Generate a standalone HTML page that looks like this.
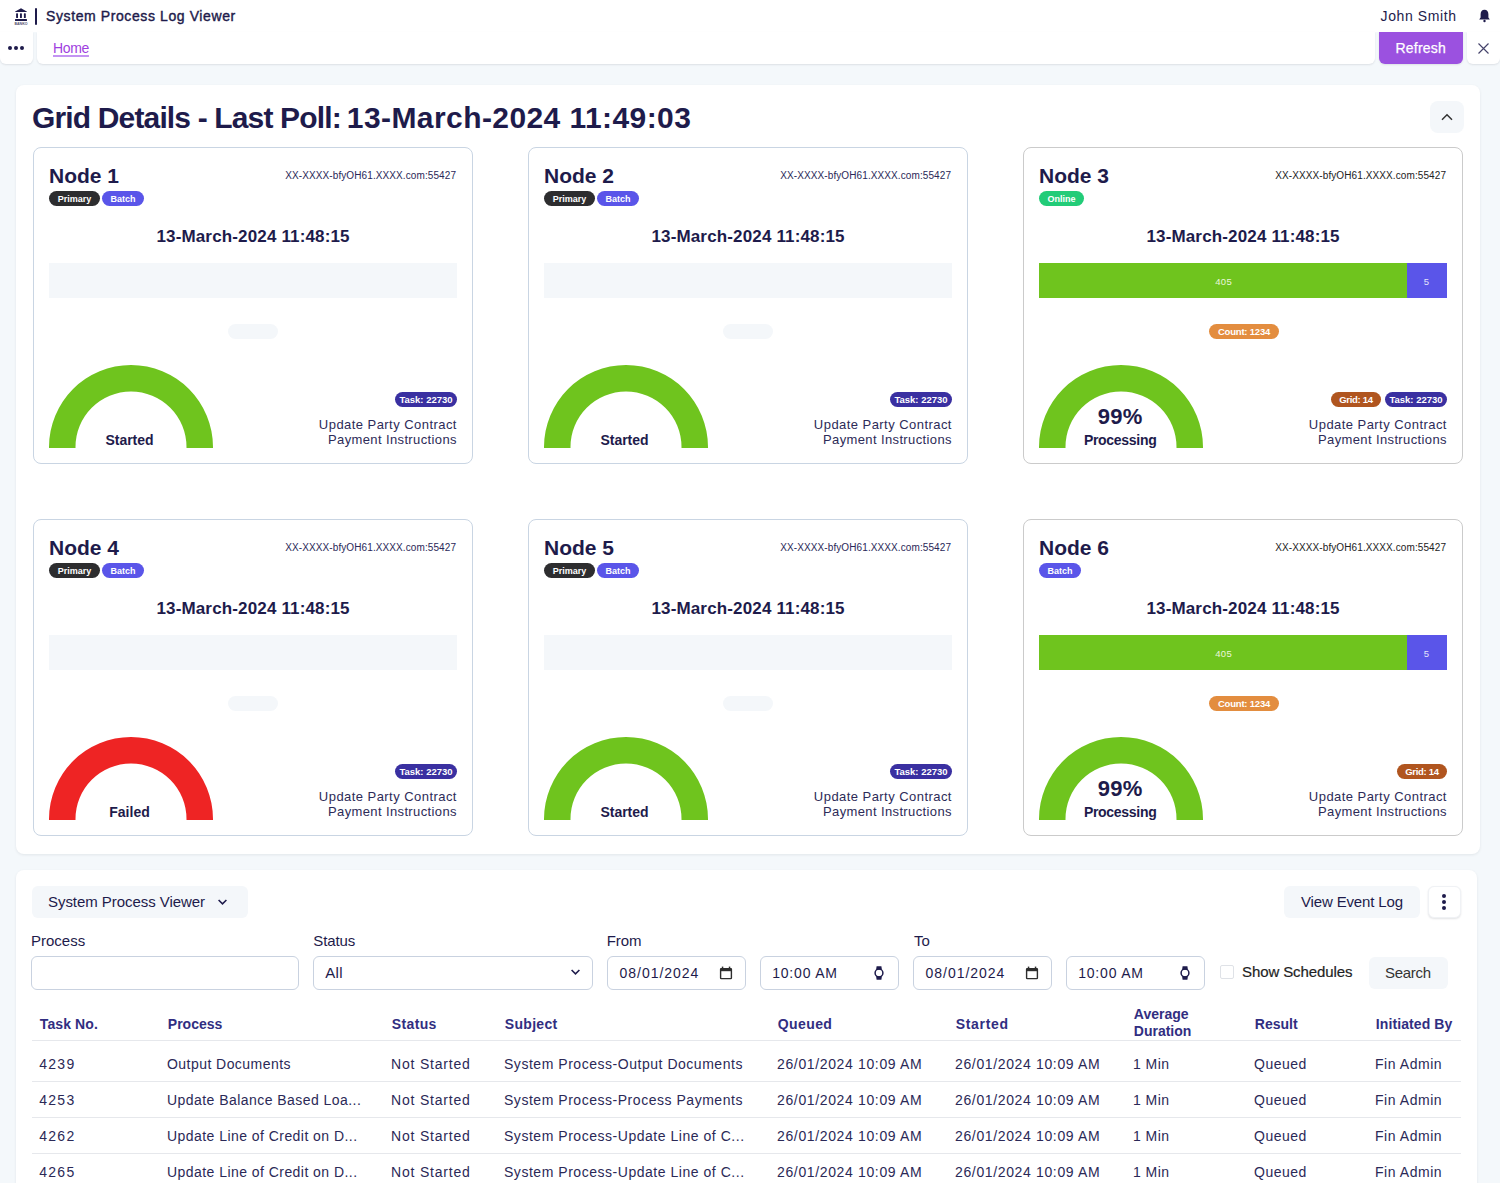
<!DOCTYPE html>
<html><head><meta charset="utf-8"><title>System Process Log Viewer</title>
<style>
html,body{margin:0;padding:0;}
body{width:1500px;height:1183px;overflow:hidden;position:relative;background:#f4f8fb;font-family:"Liberation Sans",sans-serif;}
.t{position:absolute;white-space:nowrap;line-height:1;}
.b{position:absolute;}
.bd{height:15px;line-height:16px;border-radius:8px;color:#fff;font-weight:700;text-align:center;white-space:nowrap;}
</style></head><body>
<div class="b" style="left:0px;top:0px;width:1500px;height:32px;background:#fff;"></div>
<svg class="b" style="left:13px;top:7px" width="17" height="20" viewBox="0 0 17 20">
<path d="M2.2 4.6 L8 1.2 L13.8 4.6 Q14.2 5 13.6 5.1 L2.4 5.1 Q1.8 5 2.2 4.6 Z" fill="#1e1b4b"/>
<rect x="3.1" y="6.3" width="1.9" height="4.7" rx="0.6" fill="#1e1b4b"/>
<rect x="7" y="6.3" width="1.9" height="4.7" rx="0.6" fill="#1e1b4b"/>
<rect x="10.9" y="6.3" width="1.9" height="4.7" rx="0.6" fill="#1e1b4b"/>
<rect x="2" y="11.9" width="12" height="2.1" rx="0.5" fill="#1e1b4b"/>
<text x="8" y="17.9" font-size="3.9" font-family="Liberation Sans" font-weight="700" text-anchor="middle" fill="#1e1b4b" opacity="0.8" textLength="13" lengthAdjust="spacingAndGlyphs">BANKO</text>
</svg>
<div class="b" style="left:35.4px;top:8px;width:1.7px;height:16.8px;background:#1e1b4b;border-radius:1px;"></div>
<div class="t" style="top:9px;font-size:14px;font-weight:400;color:#1e1b4b;letter-spacing:0.6px;left:46px;-webkit-text-stroke:0.4px #1e1b4b;">System Process Log Viewer</div>
<div class="t" style="top:9px;font-size:14px;font-weight:400;color:#1e1b4b;letter-spacing:0.6px;right:44px;margin-right:-0.6px;">John Smith</div>
<svg class="b" style="left:1478px;top:9px" width="13" height="14" viewBox="0 0 13 14">
<path d="M6.5 0.8 C4 0.8 2.6 2.8 2.6 5.2 L2.6 8.6 L1.2 10.6 L11.8 10.6 L10.4 8.6 L10.4 5.2 C10.4 2.8 9 0.8 6.5 0.8 Z" fill="#1e1b4b"/>
<circle cx="6.5" cy="12" r="1.2" fill="#1e1b4b"/>
</svg>
<div class="b" style="left:0px;top:32px;width:33px;height:32px;background:#fff;border-radius:0 0 6px 6px;box-shadow:0 1px 2px rgba(16,24,40,0.10);"></div>
<div class="b" style="left:8.350000000000001px;top:46px;width:3.9px;height:3.9px;border-radius:50%;background:#1e1b4b"></div>
<div class="b" style="left:14.350000000000001px;top:46px;width:3.9px;height:3.9px;border-radius:50%;background:#1e1b4b"></div>
<div class="b" style="left:20.35px;top:46px;width:3.9px;height:3.9px;border-radius:50%;background:#1e1b4b"></div>
<div class="b" style="left:37px;top:32px;width:1338px;height:32px;background:#fff;border-radius:0 0 6px 6px;box-shadow:0 1px 2px rgba(16,24,40,0.10);"></div>
<div class="t" style="top:41px;font-size:14px;font-weight:400;color:#9f3fe0;letter-spacing:-0.35px;left:53px;text-decoration:underline;text-decoration-color:#c394f2;text-decoration-thickness:1.5px;text-underline-offset:1.8px;">Home</div>
<div class="b" style="left:1379px;top:32px;width:84px;height:32px;background:#9b51e0;border-radius:0 0 6px 6px;box-shadow:0 1px 2px rgba(16,24,40,0.10);"></div>
<div class="t" style="top:41px;font-size:14px;font-weight:400;color:#fff;letter-spacing:0.2px;left:1395.5px;-webkit-text-stroke:0.25px #fff;">Refresh</div>
<div class="b" style="left:1467px;top:32px;width:33px;height:32px;background:#fff;border-radius:0 0 6px 6px;box-shadow:0 1px 2px rgba(16,24,40,0.10);"></div>
<svg class="b" style="left:1477px;top:42px" width="13" height="13" viewBox="0 0 13 13">
<path d="M1.5 1.5 L11.5 11.5 M11.5 1.5 L1.5 11.5" stroke="#45436b" stroke-width="1.15" fill="none"/>
</svg>
<div class="b" style="left:16px;top:85px;width:1464px;height:769px;background:#fff;border-radius:8px;box-shadow:0 1px 3px rgba(16,24,40,0.08);"></div>
<div class="t" style="top:103px;font-size:30px;font-weight:700;color:#1e1b4b;letter-spacing:-0.85px;left:32px;">Grid Details - Last Poll:</div>
<div class="t" style="top:103px;font-size:30px;font-weight:700;color:#1e1b4b;letter-spacing:0.42px;left:346.8px;">13-March-2024 11:49:03</div>
<div class="b" style="left:1430px;top:101px;width:34px;height:32px;background:#f4f7fa;border-radius:8px;"></div>
<svg class="b" style="left:1440px;top:112px" width="14" height="10" viewBox="0 0 14 10">
<path d="M2 7.8 L7 2.8 L12 7.8" stroke="#333" stroke-width="1.5" fill="none"/>
</svg>
<div class="b" style="left:33px;top:147px;width:440px;height:317px;border:1px solid #c9d5e3;border-radius:8px;box-sizing:border-box;background:#fff;"></div>
<div class="t" style="top:165px;font-size:21px;font-weight:700;color:#1e1b4b;left:49px;">Node 1</div>
<div class="t" style="top:171px;font-size:10px;font-weight:400;color:#2a2858;letter-spacing:0.1px;right:1044px;margin-right:-0.1px;">XX-XXXX-bfyOH61.XXXX.com:55427</div>
<div class="b bd" style="left:49px;top:191px;width:51px;background:#2d2d2f;font-size:9px;letter-spacing:0px">Primary</div>
<div class="b bd" style="left:102px;top:191px;width:42px;background:#5a55e9;font-size:9px;letter-spacing:0px">Batch</div>
<div class="t" style="top:228px;font-size:17px;font-weight:700;color:#1e1b4b;letter-spacing:0.15px;left:-47px;width:600px;text-align:center;text-indent:0.15px;">13-March-2024 11:48:15</div>
<div class="b" style="left:49px;top:263px;width:408px;height:35px;background:#f4f7fa;"></div>
<div class="b" style="left:228px;top:324px;width:50px;height:15px;background:#f4f7fa;border-radius:8px;"></div>
<svg class="b" style="left:49px;top:365px" width="164" height="83" viewBox="0 0 164 83"><path d="M0 83 L0 82 A82 82 0 0 1 164 82 L164 83 L137.5 83 L137.5 82 A55.5 55.5 0 0 0 26.5 82 L26.5 83 Z" fill="#6fc41e"/></svg>
<div class="t" style="top:433px;font-size:14px;font-weight:700;color:#1e1b4b;left:-170.5px;width:600px;text-align:center;">Started</div>
<div class="b bd" style="left:395px;top:392px;width:62px;background:#3a30a1;font-size:9.5px;letter-spacing:0px">Task: 22730</div>
<div class="t" style="top:418px;font-size:13px;font-weight:400;color:#2d2b58;letter-spacing:0.45px;right:1043.5px;margin-right:-0.45px;">Update Party Contract</div>
<div class="t" style="top:433px;font-size:13px;font-weight:400;color:#2d2b58;letter-spacing:0.37px;right:1043.5px;margin-right:-0.37px;">Payment Instructions</div>
<div class="b" style="left:528px;top:147px;width:440px;height:317px;border:1px solid #c9d5e3;border-radius:8px;box-sizing:border-box;background:#fff;"></div>
<div class="t" style="top:165px;font-size:21px;font-weight:700;color:#1e1b4b;left:544px;">Node 2</div>
<div class="t" style="top:171px;font-size:10px;font-weight:400;color:#2a2858;letter-spacing:0.1px;right:549px;margin-right:-0.1px;">XX-XXXX-bfyOH61.XXXX.com:55427</div>
<div class="b bd" style="left:544px;top:191px;width:51px;background:#2d2d2f;font-size:9px;letter-spacing:0px">Primary</div>
<div class="b bd" style="left:597px;top:191px;width:42px;background:#5a55e9;font-size:9px;letter-spacing:0px">Batch</div>
<div class="t" style="top:228px;font-size:17px;font-weight:700;color:#1e1b4b;letter-spacing:0.15px;left:448px;width:600px;text-align:center;text-indent:0.15px;">13-March-2024 11:48:15</div>
<div class="b" style="left:544px;top:263px;width:408px;height:35px;background:#f4f7fa;"></div>
<div class="b" style="left:723px;top:324px;width:50px;height:15px;background:#f4f7fa;border-radius:8px;"></div>
<svg class="b" style="left:544px;top:365px" width="164" height="83" viewBox="0 0 164 83"><path d="M0 83 L0 82 A82 82 0 0 1 164 82 L164 83 L137.5 83 L137.5 82 A55.5 55.5 0 0 0 26.5 82 L26.5 83 Z" fill="#6fc41e"/></svg>
<div class="t" style="top:433px;font-size:14px;font-weight:700;color:#1e1b4b;left:324.5px;width:600px;text-align:center;">Started</div>
<div class="b bd" style="left:890px;top:392px;width:62px;background:#3a30a1;font-size:9.5px;letter-spacing:0px">Task: 22730</div>
<div class="t" style="top:418px;font-size:13px;font-weight:400;color:#2d2b58;letter-spacing:0.45px;right:548.5px;margin-right:-0.45px;">Update Party Contract</div>
<div class="t" style="top:433px;font-size:13px;font-weight:400;color:#2d2b58;letter-spacing:0.37px;right:548.5px;margin-right:-0.37px;">Payment Instructions</div>
<div class="b" style="left:1023px;top:147px;width:440px;height:317px;border:1px solid #cbcbcb;border-radius:8px;box-sizing:border-box;background:#fff;"></div>
<div class="t" style="top:165px;font-size:21px;font-weight:700;color:#1e1b4b;left:1039px;">Node 3</div>
<div class="t" style="top:171px;font-size:10px;font-weight:400;color:#222;letter-spacing:0.1px;right:54px;margin-right:-0.1px;">XX-XXXX-bfyOH61.XXXX.com:55427</div>
<div class="b bd" style="left:1039px;top:191px;width:45px;background:#22cc78;font-size:9px;letter-spacing:0px">Online</div>
<div class="t" style="top:228px;font-size:17px;font-weight:700;color:#1e1b4b;letter-spacing:0.15px;left:943px;width:600px;text-align:center;text-indent:0.15px;">13-March-2024 11:48:15</div>
<div class="b" style="left:1039px;top:263px;width:368px;height:35px;background:#6fc41e;"></div>
<div class="b" style="left:1407px;top:263px;width:40px;height:35px;background:#5a55e9;"></div>
<div class="t" style="top:277px;font-size:9.5px;font-weight:400;color:#eaf6dc;letter-spacing:0.4px;left:923.5px;width:600px;text-align:center;text-indent:0.4px;">405</div>
<div class="t" style="top:277px;font-size:9.5px;font-weight:400;color:#e4e3fb;left:1126.5px;width:600px;text-align:center;">5</div>
<div class="b bd" style="left:1209px;top:324px;width:70px;background:#e38d3f;font-size:9.5px;letter-spacing:-0.2px">Count: 1234</div>
<svg class="b" style="left:1039px;top:365px" width="164" height="83" viewBox="0 0 164 83"><path d="M0 83 L0 82 A82 82 0 0 1 164 82 L164 83 L137.5 83 L137.5 82 A55.5 55.5 0 0 0 26.5 82 L26.5 83 Z" fill="#6fc41e"/></svg>
<div class="t" style="top:406px;font-size:22px;font-weight:700;color:#1e1b4b;letter-spacing:0.2px;left:820px;width:600px;text-align:center;text-indent:0.2px;">99%</div>
<div class="t" style="top:433px;font-size:14px;font-weight:700;color:#1e1b4b;letter-spacing:-0.3px;left:820.3px;width:600px;text-align:center;text-indent:-0.3px;">Processing</div>
<div class="b bd" style="left:1385px;top:392px;width:62px;background:#3a30a1;font-size:9.5px;letter-spacing:0px">Task: 22730</div>
<div class="b bd" style="left:1331px;top:392px;width:50px;background:#b0551f;font-size:9.5px;letter-spacing:-0.3px">Grid: 14</div>
<div class="t" style="top:418px;font-size:13px;font-weight:400;color:#2d2b58;letter-spacing:0.45px;right:53.5px;margin-right:-0.45px;">Update Party Contract</div>
<div class="t" style="top:433px;font-size:13px;font-weight:400;color:#2d2b58;letter-spacing:0.37px;right:53.5px;margin-right:-0.37px;">Payment Instructions</div>
<div class="b" style="left:33px;top:519px;width:440px;height:317px;border:1px solid #c9d5e3;border-radius:8px;box-sizing:border-box;background:#fff;"></div>
<div class="t" style="top:537px;font-size:21px;font-weight:700;color:#1e1b4b;left:49px;">Node 4</div>
<div class="t" style="top:543px;font-size:10px;font-weight:400;color:#2a2858;letter-spacing:0.1px;right:1044px;margin-right:-0.1px;">XX-XXXX-bfyOH61.XXXX.com:55427</div>
<div class="b bd" style="left:49px;top:563px;width:51px;background:#2d2d2f;font-size:9px;letter-spacing:0px">Primary</div>
<div class="b bd" style="left:102px;top:563px;width:42px;background:#5a55e9;font-size:9px;letter-spacing:0px">Batch</div>
<div class="t" style="top:600px;font-size:17px;font-weight:700;color:#1e1b4b;letter-spacing:0.15px;left:-47px;width:600px;text-align:center;text-indent:0.15px;">13-March-2024 11:48:15</div>
<div class="b" style="left:49px;top:635px;width:408px;height:35px;background:#f4f7fa;"></div>
<div class="b" style="left:228px;top:696px;width:50px;height:15px;background:#f4f7fa;border-radius:8px;"></div>
<svg class="b" style="left:49px;top:737px" width="164" height="83" viewBox="0 0 164 83"><path d="M0 83 L0 82 A82 82 0 0 1 164 82 L164 83 L137.5 83 L137.5 82 A55.5 55.5 0 0 0 26.5 82 L26.5 83 Z" fill="#ee2424"/></svg>
<div class="t" style="top:805px;font-size:14px;font-weight:700;color:#1e1b4b;left:-170.5px;width:600px;text-align:center;">Failed</div>
<div class="b bd" style="left:395px;top:764px;width:62px;background:#3a30a1;font-size:9.5px;letter-spacing:0px">Task: 22730</div>
<div class="t" style="top:790px;font-size:13px;font-weight:400;color:#2d2b58;letter-spacing:0.45px;right:1043.5px;margin-right:-0.45px;">Update Party Contract</div>
<div class="t" style="top:805px;font-size:13px;font-weight:400;color:#2d2b58;letter-spacing:0.37px;right:1043.5px;margin-right:-0.37px;">Payment Instructions</div>
<div class="b" style="left:528px;top:519px;width:440px;height:317px;border:1px solid #c9d5e3;border-radius:8px;box-sizing:border-box;background:#fff;"></div>
<div class="t" style="top:537px;font-size:21px;font-weight:700;color:#1e1b4b;left:544px;">Node 5</div>
<div class="t" style="top:543px;font-size:10px;font-weight:400;color:#2a2858;letter-spacing:0.1px;right:549px;margin-right:-0.1px;">XX-XXXX-bfyOH61.XXXX.com:55427</div>
<div class="b bd" style="left:544px;top:563px;width:51px;background:#2d2d2f;font-size:9px;letter-spacing:0px">Primary</div>
<div class="b bd" style="left:597px;top:563px;width:42px;background:#5a55e9;font-size:9px;letter-spacing:0px">Batch</div>
<div class="t" style="top:600px;font-size:17px;font-weight:700;color:#1e1b4b;letter-spacing:0.15px;left:448px;width:600px;text-align:center;text-indent:0.15px;">13-March-2024 11:48:15</div>
<div class="b" style="left:544px;top:635px;width:408px;height:35px;background:#f4f7fa;"></div>
<div class="b" style="left:723px;top:696px;width:50px;height:15px;background:#f4f7fa;border-radius:8px;"></div>
<svg class="b" style="left:544px;top:737px" width="164" height="83" viewBox="0 0 164 83"><path d="M0 83 L0 82 A82 82 0 0 1 164 82 L164 83 L137.5 83 L137.5 82 A55.5 55.5 0 0 0 26.5 82 L26.5 83 Z" fill="#6fc41e"/></svg>
<div class="t" style="top:805px;font-size:14px;font-weight:700;color:#1e1b4b;left:324.5px;width:600px;text-align:center;">Started</div>
<div class="b bd" style="left:890px;top:764px;width:62px;background:#3a30a1;font-size:9.5px;letter-spacing:0px">Task: 22730</div>
<div class="t" style="top:790px;font-size:13px;font-weight:400;color:#2d2b58;letter-spacing:0.45px;right:548.5px;margin-right:-0.45px;">Update Party Contract</div>
<div class="t" style="top:805px;font-size:13px;font-weight:400;color:#2d2b58;letter-spacing:0.37px;right:548.5px;margin-right:-0.37px;">Payment Instructions</div>
<div class="b" style="left:1023px;top:519px;width:440px;height:317px;border:1px solid #cbcbcb;border-radius:8px;box-sizing:border-box;background:#fff;"></div>
<div class="t" style="top:537px;font-size:21px;font-weight:700;color:#1e1b4b;left:1039px;">Node 6</div>
<div class="t" style="top:543px;font-size:10px;font-weight:400;color:#222;letter-spacing:0.1px;right:54px;margin-right:-0.1px;">XX-XXXX-bfyOH61.XXXX.com:55427</div>
<div class="b bd" style="left:1039px;top:563px;width:42px;background:#5a55e9;font-size:9px;letter-spacing:0px">Batch</div>
<div class="t" style="top:600px;font-size:17px;font-weight:700;color:#1e1b4b;letter-spacing:0.15px;left:943px;width:600px;text-align:center;text-indent:0.15px;">13-March-2024 11:48:15</div>
<div class="b" style="left:1039px;top:635px;width:368px;height:35px;background:#6fc41e;"></div>
<div class="b" style="left:1407px;top:635px;width:40px;height:35px;background:#5a55e9;"></div>
<div class="t" style="top:649px;font-size:9.5px;font-weight:400;color:#eaf6dc;letter-spacing:0.4px;left:923.5px;width:600px;text-align:center;text-indent:0.4px;">405</div>
<div class="t" style="top:649px;font-size:9.5px;font-weight:400;color:#e4e3fb;left:1126.5px;width:600px;text-align:center;">5</div>
<div class="b bd" style="left:1209px;top:696px;width:70px;background:#e38d3f;font-size:9.5px;letter-spacing:-0.2px">Count: 1234</div>
<svg class="b" style="left:1039px;top:737px" width="164" height="83" viewBox="0 0 164 83"><path d="M0 83 L0 82 A82 82 0 0 1 164 82 L164 83 L137.5 83 L137.5 82 A55.5 55.5 0 0 0 26.5 82 L26.5 83 Z" fill="#6fc41e"/></svg>
<div class="t" style="top:778px;font-size:22px;font-weight:700;color:#1e1b4b;letter-spacing:0.2px;left:820px;width:600px;text-align:center;text-indent:0.2px;">99%</div>
<div class="t" style="top:805px;font-size:14px;font-weight:700;color:#1e1b4b;letter-spacing:-0.3px;left:820.3px;width:600px;text-align:center;text-indent:-0.3px;">Processing</div>
<div class="b bd" style="left:1397px;top:764px;width:50px;background:#b0551f;font-size:9.5px;letter-spacing:-0.3px">Grid: 14</div>
<div class="t" style="top:790px;font-size:13px;font-weight:400;color:#2d2b58;letter-spacing:0.45px;right:53.5px;margin-right:-0.45px;">Update Party Contract</div>
<div class="t" style="top:805px;font-size:13px;font-weight:400;color:#2d2b58;letter-spacing:0.37px;right:53.5px;margin-right:-0.37px;">Payment Instructions</div>
<div class="b" style="left:16px;top:870px;width:1461px;height:400px;background:#fff;border-radius:8px;box-shadow:0 1px 3px rgba(16,24,40,0.08);"></div>
<div class="b" style="left:32px;top:886px;width:216px;height:32px;background:#f4f7fa;border-radius:6px;"></div>
<div class="t" style="top:894px;font-size:15px;font-weight:400;color:#1e1b4b;letter-spacing:-0.05px;left:48px;">System Process Viewer</div>
<svg class="b" style="left:216px;top:897px" width="13" height="11" viewBox="0 0 13 11">
<path d="M2.6 3 L6.5 6.8 L10.4 3" stroke="#1e1b4b" stroke-width="1.6" fill="none"/>
</svg>
<div class="b" style="left:1284px;top:886px;width:136px;height:32px;background:#f4f7fa;border-radius:6px;"></div>
<div class="t" style="top:894px;font-size:15px;font-weight:400;color:#1e1b4b;letter-spacing:-0.15px;left:1301px;">View Event Log</div>
<div class="b" style="left:1428px;top:886px;width:33px;height:32px;background:#fff;border-radius:6px;box-sizing:border-box;border:1px solid #f0f2f5;box-shadow:0 1px 2px rgba(16,24,40,0.12);"></div>
<div class="b" style="left:1442.2px;top:893.9px;width:4.2px;height:4.2px;border-radius:50%;background:#1e1b4b"></div>
<div class="b" style="left:1442.2px;top:899.9px;width:4.2px;height:4.2px;border-radius:50%;background:#1e1b4b"></div>
<div class="b" style="left:1442.2px;top:905.9px;width:4.2px;height:4.2px;border-radius:50%;background:#1e1b4b"></div>
<div class="t" style="top:933px;font-size:15px;font-weight:400;color:#1e1b4b;left:31px;">Process</div>
<div class="t" style="top:933px;font-size:15px;font-weight:400;color:#1e1b4b;letter-spacing:-0.1px;left:313.3px;">Status</div>
<div class="t" style="top:933px;font-size:15px;font-weight:400;color:#1e1b4b;letter-spacing:-0.1px;left:606.8px;">From</div>
<div class="t" style="top:933px;font-size:15px;font-weight:400;color:#1e1b4b;letter-spacing:-0.1px;left:914px;">To</div>
<div class="b" style="left:31px;top:956px;width:268px;height:34px;border:1px solid #c9d2e0;border-radius:6px;box-sizing:border-box;background:#fff;"></div>
<div class="b" style="left:313px;top:956px;width:280px;height:34px;border:1px solid #c9d2e0;border-radius:6px;box-sizing:border-box;background:#fff;"></div>
<div class="t" style="top:965px;font-size:15px;font-weight:400;color:#1e1b4b;letter-spacing:0.3px;left:325.3px;">All</div>
<svg class="b" style="left:569px;top:967px" width="13" height="11" viewBox="0 0 13 11">
<path d="M2.6 3 L6.5 6.8 L10.4 3" stroke="#1e1b4b" stroke-width="1.6" fill="none"/>
</svg>
<div class="b" style="left:607px;top:956px;width:139px;height:34px;border:1px solid #c9d2e0;border-radius:6px;box-sizing:border-box;background:#fff;"></div>
<div class="t" style="top:966px;font-size:14px;font-weight:400;color:#1e1b4b;letter-spacing:0.95px;left:619.6px;">08/01/2024</div>
<svg class="b" style="left:719px;top:966px" width="14" height="14" viewBox="0 0 14 14">
<rect x="1.6" y="2.6" width="10.8" height="10" rx="0.7" stroke="#2e2e2e" stroke-width="1.4" fill="none"/>
<rect x="1.6" y="2.6" width="10.8" height="2.6" fill="#2e2e2e"/>
<rect x="2.8" y="0.6" width="1.5" height="2.6" fill="#2e2e2e"/><rect x="9.8" y="0.6" width="1.5" height="2.6" fill="#2e2e2e"/>
</svg>
<div class="b" style="left:760px;top:956px;width:139px;height:34px;border:1px solid #c9d2e0;border-radius:6px;box-sizing:border-box;background:#fff;"></div>
<div class="t" style="top:966px;font-size:14px;font-weight:400;color:#1e1b4b;letter-spacing:0.8px;left:772.2px;">10:00 AM</div>
<svg class="b" style="left:873px;top:965px" width="12" height="16" viewBox="0 0 12 16">
<circle cx="6" cy="8" r="3.9" stroke="#1e1b4b" stroke-width="1.5" fill="none"/>
<path d="M3.1 4.8 L3.6 1.2 L8.4 1.2 L8.9 4.8 Z M3.1 11.2 L3.6 14.8 L8.4 14.8 L8.9 11.2 Z" fill="#1e1b4b"/>
</svg>
<div class="b" style="left:913px;top:956px;width:139px;height:34px;border:1px solid #c9d2e0;border-radius:6px;box-sizing:border-box;background:#fff;"></div>
<div class="t" style="top:966px;font-size:14px;font-weight:400;color:#1e1b4b;letter-spacing:0.95px;left:925.6px;">08/01/2024</div>
<svg class="b" style="left:1025px;top:966px" width="14" height="14" viewBox="0 0 14 14">
<rect x="1.6" y="2.6" width="10.8" height="10" rx="0.7" stroke="#2e2e2e" stroke-width="1.4" fill="none"/>
<rect x="1.6" y="2.6" width="10.8" height="2.6" fill="#2e2e2e"/>
<rect x="2.8" y="0.6" width="1.5" height="2.6" fill="#2e2e2e"/><rect x="9.8" y="0.6" width="1.5" height="2.6" fill="#2e2e2e"/>
</svg>
<div class="b" style="left:1066px;top:956px;width:139px;height:34px;border:1px solid #c9d2e0;border-radius:6px;box-sizing:border-box;background:#fff;"></div>
<div class="t" style="top:966px;font-size:14px;font-weight:400;color:#1e1b4b;letter-spacing:0.8px;left:1078.2px;">10:00 AM</div>
<svg class="b" style="left:1179px;top:965px" width="12" height="16" viewBox="0 0 12 16">
<circle cx="6" cy="8" r="3.9" stroke="#1e1b4b" stroke-width="1.5" fill="none"/>
<path d="M3.1 4.8 L3.6 1.2 L8.4 1.2 L8.9 4.8 Z M3.1 11.2 L3.6 14.8 L8.4 14.8 L8.9 11.2 Z" fill="#1e1b4b"/>
</svg>
<div class="b" style="left:1220px;top:965px;width:14px;height:14px;border:1px solid #dfe2e7;border-radius:2px;box-sizing:border-box;background:#fff;"></div>
<div class="t" style="top:964px;font-size:15px;font-weight:400;color:#1f1f24;letter-spacing:-0.1px;left:1242px;-webkit-text-stroke:0.2px #1f1f24;">Show Schedules</div>
<div class="b" style="left:1369px;top:957px;width:79px;height:32px;background:#f4f7fa;border-radius:6px;"></div>
<div class="t" style="top:965px;font-size:15px;font-weight:400;color:#333;letter-spacing:-0.3px;left:1385px;">Search</div>
<div class="t" style="top:1017px;font-size:14px;font-weight:700;color:#312e81;letter-spacing:0.1px;left:39.8px;">Task No.</div>
<div class="t" style="top:1017px;font-size:14px;font-weight:700;color:#312e81;left:167.8px;">Process</div>
<div class="t" style="top:1017px;font-size:14px;font-weight:700;color:#312e81;letter-spacing:0.35px;left:391.8px;">Status</div>
<div class="t" style="top:1017px;font-size:14px;font-weight:700;color:#312e81;letter-spacing:0.3px;left:504.8px;">Subject</div>
<div class="t" style="top:1017px;font-size:14px;font-weight:700;color:#312e81;letter-spacing:0.4px;left:777.8px;">Queued</div>
<div class="t" style="top:1017px;font-size:14px;font-weight:700;color:#312e81;letter-spacing:0.65px;left:955.8px;">Started</div>
<div class="t" style="top:1017px;font-size:14px;font-weight:700;color:#312e81;left:1254.8px;">Result</div>
<div class="t" style="top:1017px;font-size:14px;font-weight:700;color:#312e81;letter-spacing:0.1px;left:1375.8px;">Initiated By</div>
<div class="t" style="top:1007px;font-size:14px;font-weight:700;color:#312e81;left:1133.8px;">Average</div>
<div class="t" style="top:1024px;font-size:14px;font-weight:700;color:#312e81;left:1133.8px;">Duration</div>
<div class="b" style="left:32px;top:1040px;width:1429px;height:1px;background:#e6e8ec;"></div>
<div class="t" style="top:1057px;font-size:14px;font-weight:400;color:#2b2957;letter-spacing:1.3px;left:39.2px;">4239</div>
<div class="t" style="top:1057px;font-size:14px;font-weight:400;color:#2b2957;letter-spacing:0.45px;left:167.0px;">Output Documents</div>
<div class="t" style="top:1057px;font-size:14px;font-weight:400;color:#2b2957;letter-spacing:0.8px;left:391.0px;">Not Started</div>
<div class="t" style="top:1057px;font-size:14px;font-weight:400;color:#2b2957;letter-spacing:0.53px;left:504.0px;">System Process-Output Documents</div>
<div class="t" style="top:1057px;font-size:14px;font-weight:400;color:#2b2957;letter-spacing:0.64px;left:777.0px;">26/01/2024 10:09 AM</div>
<div class="t" style="top:1057px;font-size:14px;font-weight:400;color:#2b2957;letter-spacing:0.64px;left:955.0px;">26/01/2024 10:09 AM</div>
<div class="t" style="top:1057px;font-size:14px;font-weight:400;color:#2b2957;letter-spacing:0.45px;left:1133.0px;">1 Min</div>
<div class="t" style="top:1057px;font-size:14px;font-weight:400;color:#2b2957;letter-spacing:0.5px;left:1254.0px;">Queued</div>
<div class="t" style="top:1057px;font-size:14px;font-weight:400;color:#2b2957;letter-spacing:0.55px;left:1375.0px;">Fin Admin</div>
<div class="b" style="left:32px;top:1081px;width:1429px;height:1px;background:#e6e8ec;"></div>
<div class="t" style="top:1093px;font-size:14px;font-weight:400;color:#2b2957;letter-spacing:1.3px;left:39.2px;">4253</div>
<div class="t" style="top:1093px;font-size:14px;font-weight:400;color:#2b2957;letter-spacing:0.45px;left:167.0px;">Update Balance Based Loa...</div>
<div class="t" style="top:1093px;font-size:14px;font-weight:400;color:#2b2957;letter-spacing:0.8px;left:391.0px;">Not Started</div>
<div class="t" style="top:1093px;font-size:14px;font-weight:400;color:#2b2957;letter-spacing:0.53px;left:504.0px;">System Process-Process Payments</div>
<div class="t" style="top:1093px;font-size:14px;font-weight:400;color:#2b2957;letter-spacing:0.64px;left:777.0px;">26/01/2024 10:09 AM</div>
<div class="t" style="top:1093px;font-size:14px;font-weight:400;color:#2b2957;letter-spacing:0.64px;left:955.0px;">26/01/2024 10:09 AM</div>
<div class="t" style="top:1093px;font-size:14px;font-weight:400;color:#2b2957;letter-spacing:0.45px;left:1133.0px;">1 Min</div>
<div class="t" style="top:1093px;font-size:14px;font-weight:400;color:#2b2957;letter-spacing:0.5px;left:1254.0px;">Queued</div>
<div class="t" style="top:1093px;font-size:14px;font-weight:400;color:#2b2957;letter-spacing:0.55px;left:1375.0px;">Fin Admin</div>
<div class="b" style="left:32px;top:1117px;width:1429px;height:1px;background:#e6e8ec;"></div>
<div class="t" style="top:1129px;font-size:14px;font-weight:400;color:#2b2957;letter-spacing:1.3px;left:39.2px;">4262</div>
<div class="t" style="top:1129px;font-size:14px;font-weight:400;color:#2b2957;letter-spacing:0.45px;left:167.0px;">Update Line of Credit on D...</div>
<div class="t" style="top:1129px;font-size:14px;font-weight:400;color:#2b2957;letter-spacing:0.8px;left:391.0px;">Not Started</div>
<div class="t" style="top:1129px;font-size:14px;font-weight:400;color:#2b2957;letter-spacing:0.53px;left:504.0px;">System Process-Update Line of C...</div>
<div class="t" style="top:1129px;font-size:14px;font-weight:400;color:#2b2957;letter-spacing:0.64px;left:777.0px;">26/01/2024 10:09 AM</div>
<div class="t" style="top:1129px;font-size:14px;font-weight:400;color:#2b2957;letter-spacing:0.64px;left:955.0px;">26/01/2024 10:09 AM</div>
<div class="t" style="top:1129px;font-size:14px;font-weight:400;color:#2b2957;letter-spacing:0.45px;left:1133.0px;">1 Min</div>
<div class="t" style="top:1129px;font-size:14px;font-weight:400;color:#2b2957;letter-spacing:0.5px;left:1254.0px;">Queued</div>
<div class="t" style="top:1129px;font-size:14px;font-weight:400;color:#2b2957;letter-spacing:0.55px;left:1375.0px;">Fin Admin</div>
<div class="b" style="left:32px;top:1153px;width:1429px;height:1px;background:#e6e8ec;"></div>
<div class="t" style="top:1165px;font-size:14px;font-weight:400;color:#2b2957;letter-spacing:1.3px;left:39.2px;">4265</div>
<div class="t" style="top:1165px;font-size:14px;font-weight:400;color:#2b2957;letter-spacing:0.45px;left:167.0px;">Update Line of Credit on D...</div>
<div class="t" style="top:1165px;font-size:14px;font-weight:400;color:#2b2957;letter-spacing:0.8px;left:391.0px;">Not Started</div>
<div class="t" style="top:1165px;font-size:14px;font-weight:400;color:#2b2957;letter-spacing:0.53px;left:504.0px;">System Process-Update Line of C...</div>
<div class="t" style="top:1165px;font-size:14px;font-weight:400;color:#2b2957;letter-spacing:0.64px;left:777.0px;">26/01/2024 10:09 AM</div>
<div class="t" style="top:1165px;font-size:14px;font-weight:400;color:#2b2957;letter-spacing:0.64px;left:955.0px;">26/01/2024 10:09 AM</div>
<div class="t" style="top:1165px;font-size:14px;font-weight:400;color:#2b2957;letter-spacing:0.45px;left:1133.0px;">1 Min</div>
<div class="t" style="top:1165px;font-size:14px;font-weight:400;color:#2b2957;letter-spacing:0.5px;left:1254.0px;">Queued</div>
<div class="t" style="top:1165px;font-size:14px;font-weight:400;color:#2b2957;letter-spacing:0.55px;left:1375.0px;">Fin Admin</div>
</body></html>
